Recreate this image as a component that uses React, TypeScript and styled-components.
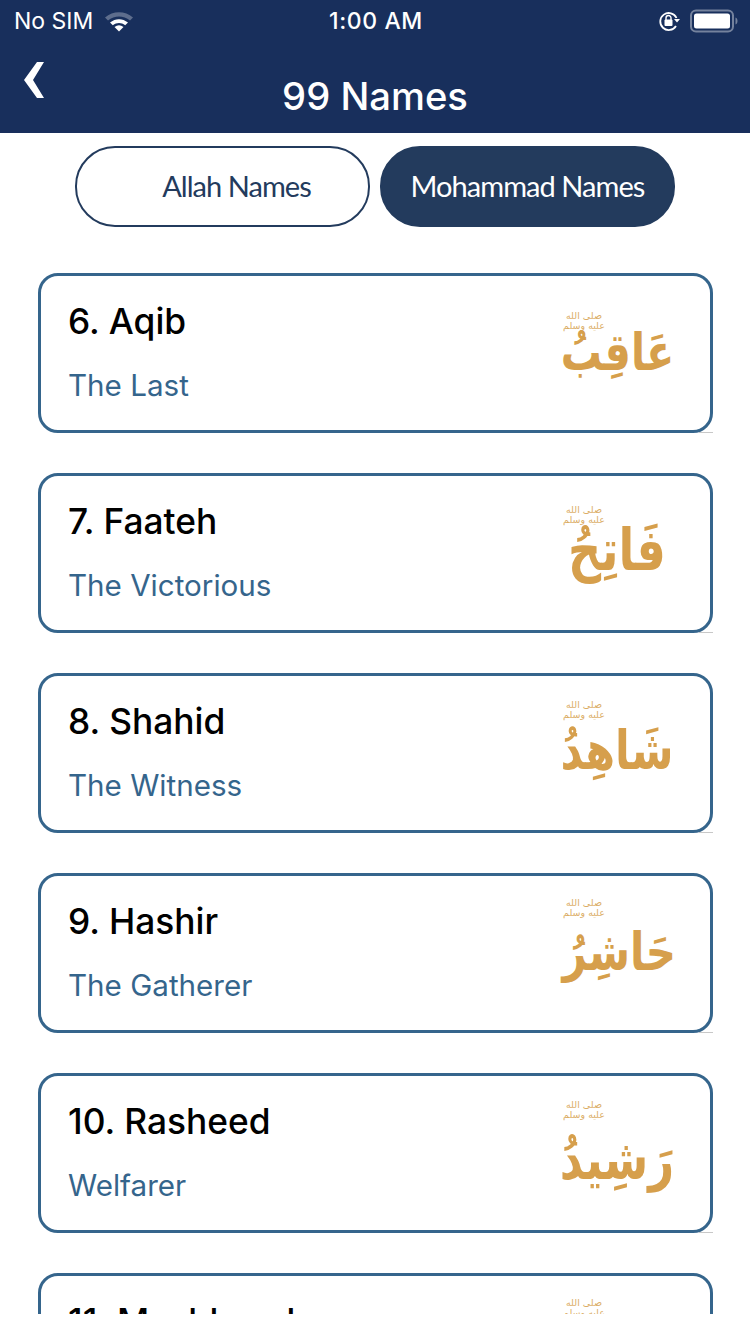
import React from "react";
import styled, { createGlobalStyle } from "styled-components";

const Global = createGlobalStyle`
  html, body { margin: 0; padding: 0; background: #fff; }
  body { font-family: "Inter", "Liberation Sans", sans-serif; }
`;

const Screen = styled.div`
  width: 750px;
  height: 1334px;
  display: flex;
  flex-direction: column;
  overflow: hidden;
  background: #fff;
`;

const Header = styled.header`
  height: 133px;
  flex: none;
  background: #182f5c;
  color: #fff;
  display: flex;
  flex-direction: column;
`;

const StatusBar = styled.div`
  box-sizing: border-box;
  height: 40px;
  padding: 1px 12px 0 14px;
  display: grid;
  grid-template-columns: 1fr auto 1fr;
  align-items: center;
  font-size: 23px;
`;

const StatusLeft = styled.div`
  display: flex;
  align-items: center;
  gap: 11px;
`;

const StatusTime = styled.span`
  font-weight: 500;
  letter-spacing: 0.6px;
`;

const StatusRight = styled.div`
  display: flex;
  align-items: center;
  justify-content: flex-end;
  gap: 10px;
`;

const NavBar = styled.div`
  flex: 1;
  position: relative;
  display: flex;
  justify-content: center;
  padding-top: 33px;
`;

const Back = styled.svg`
  position: absolute;
  left: 24px;
  top: 22px;
`;

const Title = styled.h1`
  margin: 0;
  font-size: 38.2px;
  line-height: 46px;
  font-weight: 500;
`;

const Tabs = styled.div`
  flex: none;
  display: flex;
  justify-content: center;
  gap: 10px;
  padding-top: 13px;
`;

const Tab = styled.div<{ $active?: boolean }>`
  box-sizing: border-box;
  width: 295px;
  height: 81px;
  border-radius: 40px;
  border: 2.5px solid #233b5d;
  background: ${(p) => (p.$active ? "#233b5d" : "#fff")};
  color: ${(p) => (p.$active ? "#fff" : "#233b5d")};
  display: flex;
  align-items: center;
  justify-content: center;
  padding-left: ${(p) => (p.$active ? "0" : "28px")};
  padding-bottom: 2px;
  font-family: "Lato", sans-serif;
  font-size: 29px;
  letter-spacing: -0.95px;
`;

const List = styled.div`
  flex: none;
  height: 1041px;
  margin-top: 46px;
  overflow: hidden;
  padding: 0 37px 0 38px;
  display: flex;
  flex-direction: column;
  gap: 40px;
`;

const Card = styled.div`
  box-sizing: border-box;
  flex: none;
  height: 160px;
  border: 3px solid #35658c;
  border-radius: 20px;
  display: flex;
  justify-content: space-between;
  padding: 0 34px 0 27px;
  position: relative;

  &::after {
    content: "";
    position: absolute;
    right: -3px;
    bottom: -3px;
    width: 14px;
    height: 1px;
    background: #c8c8c8;
  }
`;

const Info = styled.div`
  display: flex;
  flex-direction: column;
  padding-top: 25px;
  gap: 24px;
`;

const Name = styled.div`
  font-size: 35.3px;
  line-height: 42px;
  font-weight: 500;
  color: #000;
`;

const Meaning = styled.div`
  font-size: 29.6px;
  line-height: 36px;
  color: #35658c;
`;

const Calligraphy = styled.div<{ $offset: number }>`
  width: 118px;
  padding-top: ${(p) => p.$offset}px;
  display: flex;
  flex-direction: column;
  color: #d69f4c;
  font-family: "DejaVu Sans", sans-serif;
`;

const Honorific = styled.div`
  width: 46px;
  height: 20px;
  margin-left: 3px;
  font-size: 9.5px;
  line-height: 10px;
  text-align: center;
  opacity: 0.85;
  direction: rtl;
`;

const Arabic = styled.div<{ $size: number; $gap: number; $shift: number }>`
  margin-top: ${(p) => p.$gap}px;
  margin-left: ${(p) => p.$shift}px;
  text-align: center;
  font-size: ${(p) => p.$size}px;
  line-height: 40px;
  font-weight: 700;
  direction: rtl;
  white-space: nowrap;
  transform: scaleY(1.25);
`;

const names = [
  { n: "6. Aqib", m: "The Last", a: "عَاقِبُ", top: 38, size: 41, gap: 1, shift: 1 },
  { n: "7. Faateh", m: "The Victorious", a: "فَاتِحُ", top: 32, size: 46, gap: 5, shift: 0 },
  { n: "8. Shahid", m: "The Witness", a: "شَاهِدُ", top: 27, size: 43, gap: 10, shift: 0 },
  { n: "9. Hashir", m: "The Gatherer", a: "حَاشِرُ", top: 25, size: 42, gap: 14, shift: 6 },
  { n: "10. Rasheed", m: "Welfarer", a: "رَشِيدُ", top: 27, size: 45, gap: 20, shift: 0 },
  { n: "11. Mashhood", m: "Witnessed", a: "مَشْهُودُ", top: 25, size: 38, gap: 17, shift: 0 },
];

export default function App() {
  return (
    <Screen>
      <Global />
      <Header>
        <StatusBar>
          <StatusLeft>
            <span>No SIM</span>
            <svg width="30" height="22" viewBox="0 0 30 22">
              <path d="M1 7.500C9 .5 21 .5 29 7.500l-3 3C19.500 5 10.500 5 4 10.500z" fill="#fff" opacity=".3" />
              <path d="M6 12.500c5.500-4.500 12.500-4.500 18 0l-2.800 2.800c-4-3-8.400-3-12.400 0z" fill="#fff" />
              <path d="M10.500 17c3-2.200 6-2.200 9 0L15 21.500z" fill="#fff" />
            </svg>
          </StatusLeft>
          <StatusTime>1:00 AM</StatusTime>
          <StatusRight>
            <svg width="22" height="22" viewBox="0 0 22 22" fill="none">
              <path d="M18.500 8A8.500 8.500 0 1 0 18 16" stroke="#fff" strokeWidth="1.800" />
              <path d="M16 9h6l-3 3.500z" fill="#fff" />
              <rect x="6.500" y="9.500" width="8" height="6.500" rx="1" fill="#fff" />
              <path d="M8 10V8a2.500 2.500 0 0 1 5 0v2" stroke="#fff" strokeWidth="1.400" />
            </svg>
            <svg width="48" height="24" viewBox="0 0 48 24" fill="none">
              <rect x="1" y="1.500" width="42" height="21" rx="5" stroke="#fff" strokeOpacity=".4" strokeWidth="2" />
              <rect x="4" y="4.500" width="36" height="15" rx="2.500" fill="#fff" />
              <path d="M45.500 8.500c1.300.5 2 1.800 2 3.500s-.7 3-2 3.500z" fill="#fff" fillOpacity=".4" />
            </svg>
          </StatusRight>
        </StatusBar>
        <NavBar>
          <Back width="20" height="36" viewBox="0 0 20 36">
            <path d="M13 0h7L9 18l11 18h-7L0 18z" fill="#fff" />
          </Back>
          <Title>99 Names</Title>
        </NavBar>
      </Header>
      <Tabs>
        <Tab>Allah Names</Tab>
        <Tab $active>Mohammad Names</Tab>
      </Tabs>
      <List>
        {names.map((x) => (
          <Card key={x.n}>
            <Info>
              <Name>{x.n}</Name>
              <Meaning>{x.m}</Meaning>
            </Info>
            <Calligraphy $offset={x.top - 3}>
              <Honorific>صلى الله عليه وسلم</Honorific>
              <Arabic $size={x.size} $gap={x.gap} $shift={x.shift}>{x.a}</Arabic>
            </Calligraphy>
          </Card>
        ))}
      </List>
    </Screen>
  );
}
